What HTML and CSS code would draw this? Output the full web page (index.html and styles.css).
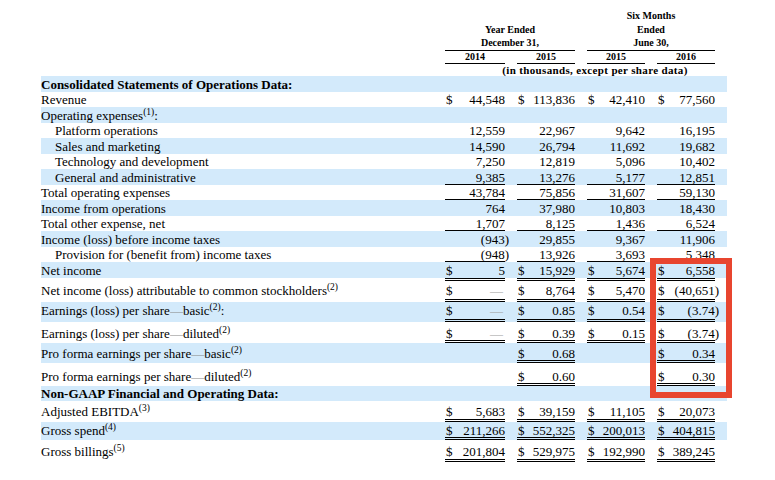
FILE: index.html
```html
<!DOCTYPE html>
<html>
<head>
<meta charset="utf-8">
<link rel="stylesheet" href="styles.css">
</head>
<body>
<div class="hdr">
  <div class="grp g1">Year Ended<br>December 31,</div>
  <div class="grp g2">Six Months<br>Ended<br>June 30,</div>
  <div class="yr y1">2014</div>
  <div class="yr y2">2015</div>
  <div class="yr y3">2015</div>
  <div class="yr y4">2016</div>
  <div class="units">(in thousands, except per share data)</div>
</div>
<div class="tbl">
  <div class="row b"><div class="lbl h"><span>Consolidated Statements of Operations Data:</span></div></div>
  <div class="row"><div class="lbl"><span>Revenue</span></div><div class="v"><i>$</i>44,548</div><div class="v"><i>$</i>113,836</div><div class="v"><i>$</i>42,410</div><div class="v"><i>$</i>77,560</div></div>
  <div class="row b"><div class="lbl"><span>Operating expenses<sup>(1)</sup>:</span></div></div>
  <div class="row"><div class="lbl in"><span>Platform operations</span></div><div class="v">12,559</div><div class="v">22,967</div><div class="v">9,642</div><div class="v">16,195</div></div>
  <div class="row b"><div class="lbl in"><span>Sales and marketing</span></div><div class="v">14,590</div><div class="v">26,794</div><div class="v">11,692</div><div class="v">19,682</div></div>
  <div class="row"><div class="lbl in"><span>Technology and development</span></div><div class="v">7,250</div><div class="v">12,819</div><div class="v">5,096</div><div class="v">10,402</div></div>
  <div class="row b"><div class="lbl in"><span>General and administrative</span></div><div class="v s">9,385</div><div class="v s">13,276</div><div class="v s">5,177</div><div class="v s">12,851</div></div>
  <div class="row"><div class="lbl"><span>Total operating expenses</span></div><div class="v s">43,784</div><div class="v s">75,856</div><div class="v s">31,607</div><div class="v s">59,130</div></div>
  <div class="row b"><div class="lbl"><span>Income from operations</span></div><div class="v">764</div><div class="v">37,980</div><div class="v">10,803</div><div class="v">18,430</div></div>
  <div class="row"><div class="lbl"><span>Total other expense, net</span></div><div class="v s">1,707</div><div class="v s">8,125</div><div class="v s">1,436</div><div class="v s">6,524</div></div>
  <div class="row b"><div class="lbl"><span>Income (loss) before income taxes</span></div><div class="v"><span class="ng">(943)</span></div><div class="v">29,855</div><div class="v">9,367</div><div class="v">11,906</div></div>
  <div class="row"><div class="lbl in"><span>Provision for (benefit from) income taxes</span></div><div class="v s"><span class="ng">(948)</span></div><div class="v s">13,926</div><div class="v s">3,693</div><div class="v s">5,348</div></div>
  <div class="row b ni"><div class="lbl"><span>Net income</span></div><div class="v u"><i>$</i>5</div><div class="v u"><i>$</i>15,929</div><div class="v u"><i>$</i>5,674</div><div class="v u"><i>$</i>6,558</div></div>
  <div class="row d h24 p2"><div class="lbl"><span>Net income (loss) attributable to common stockholders<sup>(2)</sup></span></div><div class="v u"><i>$</i><span class="z">—</span></div><div class="v u"><i>$</i>8,764</div><div class="v u"><i>$</i>5,470</div><div class="v u"><i>$</i><span class="ng">(40,651)</span></div></div>
  <div class="row b d h20 p2"><div class="lbl"><span>Earnings (loss) per share<span class="gd">—</span>basic<sup>(2)</sup>:</span></div><div class="v u"><i>$</i><span class="z">—</span></div><div class="v u"><i>$</i>0.85</div><div class="v u"><i>$</i>0.54</div><div class="v u"><i>$</i><span class="ng">(3.74)</span></div></div>
  <div class="row d h21 p0"><div class="lbl"><span>Earnings (loss) per share<span class="gd">—</span>diluted<sup>(2)</sup></span></div><div class="v u"><i>$</i><span class="z">—</span></div><div class="v u"><i>$</i>0.39</div><div class="v u"><i>$</i>0.15</div><div class="v u"><i>$</i><span class="ng">(3.74)</span></div></div>
  <div class="row b d h20 p0"><div class="lbl"><span>Pro forma earnings per share<span class="gd">—</span>basic<sup>(2)</sup></span></div><div></div><div class="v u"><i>$</i>0.68</div><div></div><div class="v u"><i>$</i>0.34</div></div>
  <div class="row d h23 p0"><div class="lbl"><span>Pro forma earnings per share<span class="gd">—</span>diluted<sup>(2)</sup></span></div><div></div><div class="v u"><i>$</i>0.60</div><div></div><div class="v u"><i>$</i>0.30</div></div>
  <div class="row b h15"><div class="lbl h"><span>Non-GAAP Financial and Operating Data:</span></div></div>
  <div class="row d h21 p1"><div class="lbl"><span>Adjusted EBITDA<sup>(3)</sup></span></div><div class="v u"><i>$</i>5,683</div><div class="v u"><i>$</i>39,159</div><div class="v u"><i>$</i>11,105</div><div class="v u"><i>$</i>20,073</div></div>
  <div class="row b d h18 p0"><div class="lbl"><span>Gross spend<sup>(4)</sup></span></div><div class="v u"><i>$</i>211,266</div><div class="v u"><i>$</i>552,325</div><div class="v u"><i>$</i>200,013</div><div class="v u"><i>$</i>404,815</div></div>
  <div class="row d h22 p1"><div class="lbl"><span>Gross billings<sup>(5)</sup></span></div><div class="v u"><i>$</i>201,804</div><div class="v u"><i>$</i>529,975</div><div class="v u"><i>$</i>192,990</div><div class="v u"><i>$</i>389,245</div></div>
</div>
<div class="mark"></div>
</body>
</html>
```

FILE: styles.css
```css
* { box-sizing: border-box; margin: 0; padding: 0; }
html, body { background: #fff; }
body {
  margin: 0;
  width: 775px;
  height: 480px;
  overflow: hidden;
  position: relative;
  color: #000;
  font-family: "Liberation Serif", "Times New Roman", serif;
}
.hdr {
  display: grid;
  grid-template-columns: 392px 60px 58px 58px 58px;
  column-gap: 12px;
  margin-left: 41px;
  padding-top: 9px;
  font-weight: bold;
  font-size: 10px;
  text-align: center;
}
.grp { grid-row: 1; align-self: end; line-height: 13.5px; border-bottom: 1px solid #000; }
.g1 { grid-column: 2 / 4; }
.g2 { grid-column: 4 / 6; }
.yr { grid-row: 2; line-height: 12px; border-bottom: 1px solid #000; }
.y1 { grid-column: 2; }
.y2 { grid-column: 3; }
.y3 { grid-column: 4; }
.y4 { grid-column: 5; }
.units {
  grid-row: 3;
  grid-column: 2 / 6;
  line-height: 12.5px;
  font-size: 11px;
  letter-spacing: 0.35px;
  padding-left: 30px;
  white-space: nowrap;
}

.tbl { margin-left: 41px; width: 686px; }
.row {
  display: grid;
  grid-template-columns: 392px 60px 58px 58px 58px;
  column-gap: 12px;
  padding-right: 12px;
  height: 15.54px;
  font-size: 13px;
}
.row > div {
  display: flex;
  align-items: flex-end;
  justify-content: flex-end;
  line-height: 13px;
  padding-bottom: 1px;
  white-space: nowrap;
}
.row > .lbl { justify-content: flex-start; }
.b { background: #d3eafb; }
.h { font-weight: bold; }
.in { padding-left: 14px; }
.v i { font-style: normal; margin-right: auto; padding-left: 1px; }
.row > .s { border-bottom: 1px solid #000; padding-bottom: 0; }
.ng { margin-right: -4px; }
.z { color: #9c9c9c; margin-right: 2px; }
.gd { color: #8a8a8a; }
sup { font-size: 9.5px; line-height: 0; vertical-align: 5px; }

.ni > .u { border-bottom: 3px double #000; margin-bottom: -3px; }
.d > div { border-bottom: 3px solid transparent; }
.d > .u { border-bottom: 3px double #000; }
.row.p0 > div { padding-bottom: 0; }
.row.p1 > div { padding-bottom: 1px; }
.row.p2 > div { padding-bottom: 2px; }
.h24 { height: 24px; }
.h23 { height: 23px; }
.h22 { height: 22px; }
.h21 { height: 21px; }
.h20 { height: 20px; }
.h18 { height: 18px; }
.h15 { height: 15px; }

.mark {
  position: absolute;
  left: 650px;
  top: 258px;
  width: 82px;
  height: 140px;
  border: 6px solid #e8452f;
}
```
